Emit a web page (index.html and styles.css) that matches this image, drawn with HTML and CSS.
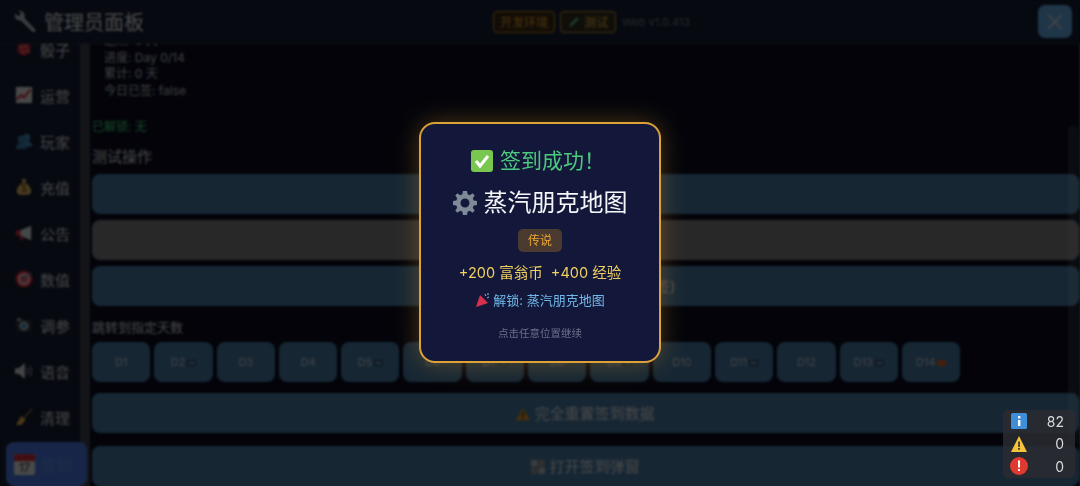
FILE: index.html
```html
<!DOCTYPE html>
<html lang="zh-CN">
  <head>
    <meta charset="UTF-8" />
    <meta name="viewport" content="width=device-width, initial-scale=1.0" />
    <title>管理员面板</title>
    <link rel="stylesheet" href="styles.css">
  </head>
  <body>
    <div class="panel">
      <header class="topbar">
        <div class="title">
          <svg class="title-icon" viewBox="0 0 24 24"><path d="M4.500 .5L7.500 4 5 6.500 1 4C0 8 3 11.500 7 11L19 22.500C20.500 24 23.500 22 22 20L11 8.500C12 4 9 0 4.500 .5Z" fill="#c4ccd4"/></svg>
          <span>管理员面板</span>
        </div>
        <div class="tags">
          <span class="tag tag-env">开发环境</span>
          <span class="tag tag-test"><svg class="pencil" viewBox="0 0 12 12"><path d="M1 11l1-3 6-6 2 2-6 6z" fill="#5fc08e"/></svg>测试</span>
          <span class="version">Web v1.0.413</span>
        </div>
        <button class="close">
          <svg viewBox="0 0 20 20"><path d="M3 3l14 14M17 3L3 17" stroke="#e4e8ee" stroke-width="1.600" fill="none"/></svg>
        </button>
      </header>

      <div class="body">
        <nav class="sidebar">
          <div class="nav-item nav-cut">
            <svg class="nav-icon" viewBox="0 0 20 20"><path d="M10 2l7 4v8l-7 4-7-4V6z" fill="#e0303c"/><circle cx="7" cy="8" r="1" fill="#fff"/><circle cx="12" cy="7" r="1" fill="#fff"/><circle cx="9" cy="13" r="1" fill="#fff"/><circle cx="14" cy="12" r="1" fill="#fff"/></svg>
            <span>骰子</span>
          </div>
          <div class="nav-item">
            <svg class="nav-icon" viewBox="0 0 20 20"><rect x="1" y="1" width="18" height="18" fill="#f0f0f4"/><path d="M2 15l5-5 3 3 7-9" stroke="#e8303c" stroke-width="2.200" fill="none"/></svg>
            <span>运营</span>
          </div>
          <div class="nav-item">
            <svg class="nav-icon" viewBox="0 0 20 20"><circle cx="13" cy="6" r="4" fill="#4a90c0"/><path d="M7 17c0-5 3-7 6-7s6 2 6 6z" fill="#4a90c0"/><circle cx="7" cy="8" r="4" fill="#3f86b8"/><path d="M1 19c0-5 3-7 6-7s6 2 6 7z" fill="#3f86b8"/></svg>
            <span>玩家</span>
          </div>
          <div class="nav-item">
            <svg class="nav-icon" viewBox="0 0 20 20"><path d="M7 1h6l-2 4c4 2 7 6 7 10 0 3-3 4-8 4s-8-1-8-4c0-4 3-8 7-10z" fill="#f0c468"/><text x="10" y="16" class="coin">$</text></svg>
            <span>充值</span>
          </div>
          <div class="nav-item">
            <svg class="nav-icon" viewBox="0 0 20 20"><path d="M1 7h5v6H1zM5 14h3l1 4H6z" fill="#f03040"/><path d="M6 7l12-5v16L6 13z" fill="#e8ecf0"/></svg>
            <span>公告</span>
          </div>
          <div class="nav-item">
            <svg class="nav-icon" viewBox="0 0 20 20"><circle cx="10" cy="10" r="9.500" fill="#f03040"/><circle cx="10" cy="10" r="6.500" fill="#f4f4f4"/><circle cx="10" cy="10" r="4" fill="#f03040"/><circle cx="10" cy="10" r="1.500" fill="#f4f4f4"/><path d="M10 10l8-7" stroke="#4f9ac8" stroke-width="1.500"/></svg>
            <span>数值</span>
          </div>
          <div class="nav-item">
            <svg class="nav-icon" viewBox="0 0 20 20"><rect x="1" y="4" width="18" height="14" rx="2" fill="#30343a"/><rect x="2" y="3" width="5" height="2" fill="#e8ecf0"/><circle cx="10" cy="11" r="5" fill="#e8ecf0"/><circle cx="10" cy="11" r="3.500" fill="#4f9ac8"/></svg>
            <span>调参</span>
          </div>
          <div class="nav-item">
            <svg class="nav-icon" viewBox="0 0 20 20"><path d="M0 7h4l7-6v18l-7-6H0z" fill="#e0e4e8"/><path d="M13 6c2 2 2 6 0 8M16 4c3 3 3 9 0 12" stroke="#e0e4e8" fill="none"/></svg>
            <span>语音</span>
          </div>
          <div class="nav-item">
            <svg class="nav-icon" viewBox="0 0 20 20"><path d="M19 1L10 11" stroke="#c09048" stroke-width="1.500"/><path d="M7 9l5 4-5 6H1z" fill="#f0c050"/></svg>
            <span>清理</span>
          </div>
          <div class="nav-item nav-active">
            <svg class="nav-icon nav-icon-lg" viewBox="0 0 20 20"><rect x="0" y="0" width="20" height="20" rx="2" fill="#f4f4f4"/><path d="M0 2a2 2 0 0 1 2-2h16a2 2 0 0 1 2 2v5H0z" fill="#e0303c"/><text x="10" y="17" class="cal">17</text></svg>
            <span>签到</span>
          </div>
        </nav>
        <div class="gutter"></div>

        <main class="content">
          <div class="stats">
            <div>连续: 0 天</div>
            <div>进度: Day 0/14</div>
            <div>累计: 0 天</div>
            <div>今日已签: false</div>
          </div>
          <div class="unlocked">已解锁: 无</div>
          <div class="heading">测试操作</div>
          <button class="action">模拟签到</button>
          <button class="action action-gray">重置今日</button>
          <button class="action">模拟第二天签到 (跳过补签)</button>
          <div class="label">跳转到指定天数</div>
          <div class="days">
            <button class="day">D1</button>
            <button class="day">D2<i class="chest"></i></button>
            <button class="day">D3</button>
            <button class="day">D4</button>
            <button class="day">D5<i class="chest"></i></button>
            <button class="day">D6</button>
            <button class="day">D7<i class="chest"></i></button>
            <button class="day">D8</button>
            <button class="day">D9<i class="chest"></i></button>
            <button class="day">D10</button>
            <button class="day">D11<i class="chest"></i></button>
            <button class="day">D12</button>
            <button class="day">D13<i class="chest"></i></button>
            <button class="day">D14<i class="gift"></i></button>
          </div>
          <button class="action action-reset">
            <svg class="btn-icon" viewBox="0 0 16 16"><path d="M8 1l8 14H0z" fill="#f0a020"/><rect x="7.200" y="5.500" width="1.700" height="5" fill="#333"/><rect x="7.200" y="11.500" width="1.700" height="1.800" fill="#333"/></svg>
            完全重置签到数据
          </button>
          <button class="action action-open">
            <svg class="btn-icon" viewBox="0 0 14 14"><rect width="6.500" height="6.500" fill="#c8c8c8"/><rect x="7.500" width="6.500" height="6.500" fill="#a0a0a0"/><rect y="7.500" width="6.500" height="6.500" fill="#a0a0a0"/><rect x="7.500" y="7.500" width="6.500" height="6.500" fill="#c8c8c8"/></svg>
            打开签到弹窗
          </button>
        </main>
      </div>
    </div>

    <div class="scroll-thumb"></div>

    <div class="overlay">
      <div class="modal">
        <div class="modal-title">
          <svg class="check" viewBox="0 0 22 22"><rect width="22" height="22" rx="3" fill="#7ac74f"/><path d="M5 11l4 5 8-10" stroke="#fff" stroke-width="3" fill="none"/></svg>
          <span>签到成功！</span>
        </div>
        <div class="modal-reward">
          <svg class="gear" viewBox="0 0 24 24"><path fill="#7f8a98" fill-rule="evenodd" d="M10 0h4l.6 3.300 2.200.9L19.600 2.300l2.100 2.100-1.900 2.800.9 2.200 3.300.6v4l-3.300.6-.9 2.200 1.900 2.800-2.100 2.100-2.800-1.900-2.200.9L14 24h-4l-.6-3.300-2.200-.9-2.800 1.900-2.100-2.100 1.900-2.800-.9-2.200L0 14v-4l3.300-.6.9-2.200L2.300 4.400l2.100-2.100 2.800 1.900 2.200-.9zM12 7.500a4.500 4.500 0 1 0 0 9 4.500 4.500 0 0 0 0-9z"/></svg>
          <span>蒸汽朋克地图</span>
        </div>
        <span class="rarity">传说</span>
        <div class="modal-coins">+200 富翁币&nbsp; +400 经验</div>
        <div class="modal-unlock">
          <svg class="popper" viewBox="0 0 16 16"><path d="M1 15L5 3l8 8z" fill="#d8304c"/><path d="M10 2l1 2M14 5l-2 1M13 1l0 2" stroke="#8fb8d8"/></svg>
          <span>解锁: 蒸汽朋克地图</span>
        </div>
        <div class="modal-hint">点击任意位置继续</div>
      </div>
    </div>

    <div class="log-counter">
      <div class="log-row">
        <svg class="log-icon" viewBox="0 0 16 16"><rect width="16" height="16" rx="1.500" fill="#3f8fd8"/><rect x="7" y="3" width="2.400" height="2.400" fill="#fff"/><rect x="7" y="7" width="2.400" height="6" fill="#fff"/></svg>
        <span>82</span>
      </div>
      <div class="log-row">
        <svg class="log-icon" viewBox="0 0 16 16"><path d="M8 0l8 16H0z" fill="#f5c33b"/><rect x="7.200" y="5.500" width="1.700" height="5.500" fill="#333"/><rect x="7.200" y="12" width="1.700" height="1.800" fill="#333"/></svg>
        <span>0</span>
      </div>
      <div class="log-row">
        <svg class="log-icon log-icon-lg" viewBox="0 0 18 18"><circle cx="9" cy="9" r="9" fill="#e03a30"/><rect x="8" y="3.500" width="2" height="7" fill="#fff"/><rect x="8" y="12" width="2" height="2" fill="#fff"/></svg>
        <span>0</span>
      </div>
    </div>
  </body>
</html>
```

FILE: styles.css
```css
* {
  box-sizing: border-box;
}
html,
body {
  height: 100%;
  margin: 0;
  overflow: hidden;
}
body {
  font-family: Inter, "Noto Sans CJK SC", sans-serif;
  background: #0a0d21;
  color: #e4e8ee;
}
.panel {
  height: 486px;
  display: flex;
  flex-direction: column;
}
.topbar {
  height: 44px;
  flex: none;
  display: flex;
  align-items: center;
  padding: 0 8px 0 14px;
  background: #141e35;
  border-bottom: 1px solid #2c3850;
  position: relative;
  z-index: 1;
}
.title {
  display: flex;
  align-items: center;
  gap: 7px;
  font-size: 20px;
  color: #f0f2f4;
  width: 479px;
}
.title-icon {
  width: 23px;
  height: 23px;
}
.tags {
  display: flex;
  align-items: center;
  gap: 5px;
  flex: 1;
}
.tag {
  display: flex;
  align-items: center;
  height: 22px;
  padding: 0 6px;
  font-size: 12px;
  border-radius: 4px;
  border: 1px solid;
}
.tag-env {
  color: #f0a830;
  border-color: #d89428;
  background: #3a2c14;
}
.tag-test {
  color: #f0c050;
  border-color: #d8a840;
  background: #33301c;
  gap: 3px;
  padding: 0 7px;
}
.pencil {
  width: 13px;
  height: 13px;
}
.version {
  font-size: 11px;
  color: #7c8494;
  margin-left: 1px;
}
.close {
  width: 34px;
  height: 33px;
  padding: 7px;
  border: none;
  border-radius: 7px;
  background: #68b4f0;
}
.close svg {
  display: block;
  width: 20px;
  height: 20px;
}
.body {
  flex: 1;
  display: flex;
  min-height: 0;
}
.sidebar {
  width: 80px;
  flex: none;
  background: #141e35;
  position: relative;
}
.nav-item {
  height: 46px;
  display: flex;
  align-items: center;
  gap: 7px;
  padding-left: 15px;
  font-size: 15px;
  color: #e0e2e6;
}
.nav-cut {
  margin-top: -18px;
}
.nav-icon {
  width: 18px;
  height: 18px;
  flex: none;
}
.nav-icon-lg {
  width: 21px;
  height: 21px;
  margin-right: -1px;
}
.nav-active {
  width: 81px;
  height: 44px;
  margin: 2px 0 0 6px;
  padding-left: 8px;
  border-radius: 8px;
  background: #4f80f0;
  color: #6a96f0;
}
.coin {
  font-size: 11px;
  text-anchor: middle;
  fill: #705018;
}
.cal {
  font-size: 11px;
  text-anchor: middle;
  fill: #333;
}
.gutter {
  width: 10px;
  flex: none;
  background: #424650;
}
.content {
  flex: 1;
  min-width: 0;
  padding: 0 0 0 2px;
  background: #0a0d21;
  border-right: 1px solid #55585c;
  overflow: hidden;
}
.stats {
  margin-top: -11px;
  padding: 0 0 0 12px;
  font-size: 12px;
  line-height: 16.700px;
  color: #c8ccd4;
}
.unlocked {
  margin-top: 19px;
  font-size: 12px;
  line-height: 16px;
  color: #4ade80;
}
.heading {
  margin-top: 12px;
  font-size: 15px;
  line-height: 20px;
  color: #e0e2e6;
}
.action {
  display: block;
  width: 100%;
  height: 40px;
  margin-top: 6px;
  border: none;
  border-radius: 8px;
  background: #4a80ac;
  color: #f0f2f4;
  font-family: inherit;
  font-size: 15px;
}
.heading + .action {
  margin-top: 7px;
}
.action-gray {
  background: #85858a;
}
.btn-icon {
  width: 14px;
  height: 14px;
  vertical-align: -2px;
}
.label {
  margin-top: 12px;
  font-size: 13px;
  line-height: 18px;
  color: #e0e2e6;
}
.days {
  display: flex;
  gap: 4px;
  margin-top: 6px;
}
.day {
  width: 58.300px;
  height: 40px;
  padding: 0;
  border: none;
  border-radius: 8px;
  background: #4a80ac;
  color: #d8dce2;
  font-family: inherit;
  font-size: 11px;
}
.chest,
.gift {
  display: inline-block;
  width: 9px;
  height: 6px;
  margin-left: 2px;
  border-radius: 1px;
  border: 1px solid #103a60;
  background: #6a8ca8;
}
.gift {
  border: none;
  background: #e86a30;
}
.action-reset {
  margin-top: 11px;
}
.action-open {
  margin-top: 13px;
}
.scroll-thumb {
  position: absolute;
  right: 2px;
  top: 125px;
  width: 10px;
  height: 320px;
  border-radius: 5px;
  background: rgba(255, 255, 255, 0.12);
}
.overlay {
  position: absolute;
  inset: 0;
  z-index: 2;
  display: flex;
  align-items: center;
  justify-content: center;
  background: rgba(0, 0, 0, 0.7);
  backdrop-filter: blur(1px);
}
.modal {
  width: 242px;
  height: 241px;
  margin-top: -1px;
  display: flex;
  flex-direction: column;
  align-items: center;
  padding-top: 22px;
  border: 2px solid #dca238;
  border-radius: 16px;
  background: #13183a;
  box-shadow: 0 0 24px rgba(232, 160, 50, 0.32);
}
.modal-title {
  display: flex;
  align-items: center;
  gap: 7px;
  margin-left: -4px;
  font-size: 21px;
  line-height: 30px;
  color: #4cc97e;
}
.check {
  width: 22px;
  height: 22px;
}
.modal-reward {
  display: flex;
  align-items: center;
  gap: 7px;
  margin-top: 10px;
  font-size: 24px;
  line-height: 34px;
  color: #f4f6fa;
}
.gear {
  width: 24px;
  height: 24px;
}
.rarity {
  margin-top: 9px;
  padding: 0 10px;
  height: 23px;
  line-height: 23px;
  font-size: 12px;
  border-radius: 5px;
  background: #4a3a30;
  color: #f0a830;
}
.modal-coins {
  margin-top: 10px;
  font-size: 14.500px;
  line-height: 22px;
  color: #f0d060;
}
.modal-unlock {
  display: flex;
  align-items: center;
  gap: 2px;
  margin-top: 6px;
  font-size: 13px;
  line-height: 20px;
  color: #70b8e8;
}
.popper {
  width: 16px;
  height: 16px;
}
.modal-hint {
  margin-top: 17px;
  font-size: 10.500px;
  line-height: 14px;
  color: #6a6e88;
}
.log-counter {
  position: absolute;
  right: 5px;
  top: 410px;
  z-index: 3;
  width: 72px;
  height: 68px;
  padding: 0 11px 0 8px;
  border-radius: 5px;
  background: rgba(42, 44, 48, 0.85);
}
.log-row {
  height: 22.500px;
  display: flex;
  align-items: center;
  justify-content: space-between;
  font-size: 14px;
  color: #d8dade;
}
.log-icon {
  width: 16px;
  height: 16px;
}
.log-icon-lg {
  width: 18px;
  height: 18px;
  margin-left: -1px;
}
```
